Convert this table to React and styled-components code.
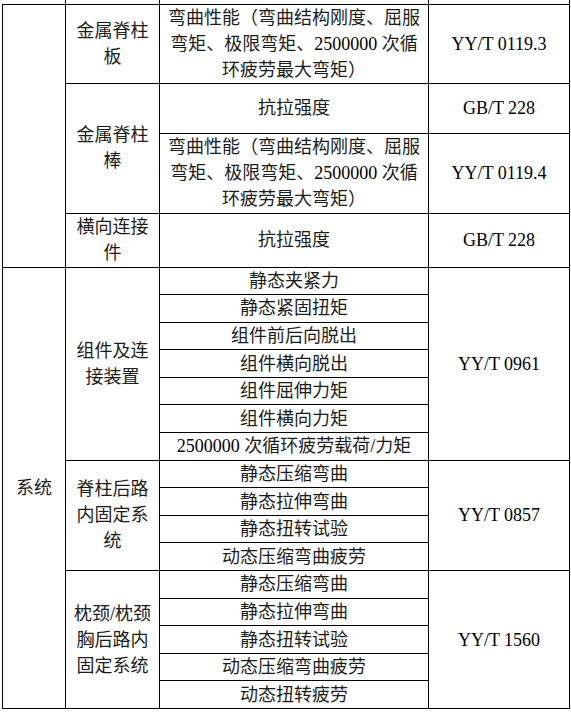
import React from "react";
import styled, { createGlobalStyle } from "styled-components";

const GlobalStyle = createGlobalStyle`
  html, body {
    margin: 0;
    padding: 0;
    background: #fff;
  }
  body {
    font-family: "Liberation Serif", "Noto Sans CJK SC", serif;
    color: #111;
  }
`;

const Table = styled.table`
  margin-left: 2px;
  width: 567px;
  border-collapse: collapse;
  table-layout: fixed;
  font-size: 18px;
  line-height: 26px;
`;

const Row = styled.tr`
  height: ${(p) => p.$h}px;
`;

const Cell = styled.td`
  border: 1px solid #000;
  padding: 0 4px;
  text-align: center;
  vertical-align: middle;
  white-space: nowrap;
  overflow: hidden;
  color: ${(p) => (p.$code ? "#000" : "#1c1c1c")};
`;

const TopCell = styled.td`
  border-right: 1px solid #000;
  border-left: ${(p) => (p.$first ? "none" : "1px solid #000")};
  padding: 0;
  line-height: 0;
`;

const Num = styled.span`
  font-family: "Liberation Serif", serif;
  color: #000;
`;

const lines = (arr) =>
  arr.map((l, i) => (
    <React.Fragment key={i}>
      {i > 0 && <br />}
      {l}
    </React.Fragment>
  ));

const bend = [
  "弯曲性能（弯曲结构刚度、屈服",
  <>弯矩、极限弯矩、<Num>2500000 </Num>次循</>,
  "环疲劳最大弯矩）",
];

const groups = [
  {
    name: ["组件及连", "接装置"],
    code: "YY/T 0961",
    items: [
      "静态夹紧力",
      "静态紧固扭矩",
      "组件前后向脱出",
      "组件横向脱出",
      "组件屈伸力矩",
      "组件横向力矩",
      <><Num>2500000 </Num>次循环疲劳载荷<Num>/</Num>力矩</>,
    ],
  },
  {
    name: ["脊柱后路", "内固定系", "统"],
    code: "YY/T 0857",
    items: ["静态压缩弯曲", "静态拉伸弯曲", "静态扭转试验", "动态压缩弯曲疲劳"],
  },
  {
    name: [<>枕颈<Num>/</Num>枕颈</>, "胸后路内", "固定系统"],
    code: "YY/T 1560",
    items: ["静态压缩弯曲", "静态拉伸弯曲", "静态扭转试验", "动态压缩弯曲疲劳", "动态扭转疲劳"],
  },
];

const SUB_H = 27.6;
const total = groups.reduce((n, g) => n + g.items.length, 0);

export default function App() {
  return (
    <>
      <GlobalStyle />
      <Table>
        <colgroup>
          <col style={{ width: 63 }} />
          <col style={{ width: 94 }} />
          <col style={{ width: 269 }} />
          <col style={{ width: 141 }} />
        </colgroup>
        <tbody>
          <Row $h={4}>
            <TopCell $first />
            <TopCell />
            <TopCell />
            <TopCell />
          </Row>
          <Row $h={79}>
            <Cell rowSpan={4} />
            <Cell>{lines(["金属脊柱", "板"])}</Cell>
            <Cell>{lines(bend)}</Cell>
            <Cell $code>YY/T 0119.3</Cell>
          </Row>
          <Row $h={50}>
            <Cell rowSpan={2}>{lines(["金属脊柱", "棒"])}</Cell>
            <Cell>抗拉强度</Cell>
            <Cell $code>GB/T 228</Cell>
          </Row>
          <Row $h={80}>
            <Cell>{lines(bend)}</Cell>
            <Cell $code>YY/T 0119.4</Cell>
          </Row>
          <Row $h={54}>
            <Cell>{lines(["横向连接", "件"])}</Cell>
            <Cell>抗拉强度</Cell>
            <Cell $code>GB/T 228</Cell>
          </Row>
          {groups.map((g, gi) =>
            g.items.map((item, ii) => (
              <Row $h={SUB_H} key={`${gi}-${ii}`}>
                {gi === 0 && ii === 0 && <Cell rowSpan={total}>系统</Cell>}
                {ii === 0 && <Cell rowSpan={g.items.length}>{lines(g.name)}</Cell>}
                <Cell>{item}</Cell>
                {ii === 0 && (
                  <Cell $code rowSpan={g.items.length}>
                    {g.code}
                  </Cell>
                )}
              </Row>
            ))
          )}
        </tbody>
      </Table>
    </>
  );
}
